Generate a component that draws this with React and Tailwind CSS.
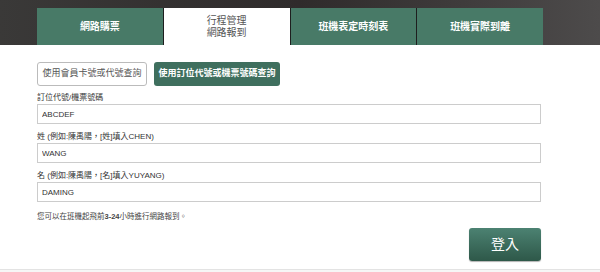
import React, { useState } from 'react';

const tabs = [
  { label: '網路購票' },
  { label: '行程管理', sub: '網路報到', active: true },
  { label: '班機表定時刻表' },
  { label: '班機實際到離' },
];

const fields = [
  { label: '訂位代號/機票號碼', value: 'ABCDEF' },
  { label: '姓 (例如:陳禹陽，[姓]填入CHEN)', value: 'WANG' },
  { label: '名 (例如:陳禹陽，[名]填入YUYANG)', value: 'DAMING' },
];

const App = () => {
  const [mode, setMode] = useState('booking');
  const [values, setValues] = useState(fields.map(f => f.value));

  return (
    <div className="w-[600px] h-[272px] bg-white flex flex-col overflow-hidden font-['Liberation_Sans','Noto_Sans_CJK_TC',sans-serif]">
      {/* Top band with tabs */}
      <div className="h-[45px] shrink-0 bg-gradient-to-r from-[#3a3938] via-[#2f2b2b] to-[#4d4b4b] flex items-end">
        <div className="ml-[37px] w-[506px] h-[37px] flex gap-px bg-[#1e1e1e]">
          {tabs.map((t, i) => (
            <div
              key={i}
              className={
                t.active
                  ? 'flex-1 bg-white flex flex-col items-center justify-center text-[10px] leading-[12px] text-[#555]'
                  : 'flex-1 bg-[#487a67] flex items-center justify-center text-[10px] font-bold text-white'
              }
            >
              <span>{t.label}</span>
              {t.sub && <span>{t.sub}</span>}
            </div>
          ))}
        </div>
      </div>

      {/* Form */}
      <div className="flex-1 ml-[37px] w-[504px] pt-[17px] flex flex-col">
        <div className="flex gap-[7px]">
          <button
            type="button"
            onClick={() => setMode('member')}
            className="h-[24px] w-[110px] rounded-[3px] border border-[#bbb] bg-white text-[9px] text-[#555]"
          >
            使用會員卡號或代號查詢
          </button>
          <button
            type="button"
            onClick={() => setMode('booking')}
            className="h-[24px] w-[126px] rounded-[3px] bg-[#3f6f5e] text-[9px] font-bold text-white"
          >
            使用訂位代號或機票號碼查詢
          </button>
        </div>

        <div className="mt-[7px] flex flex-col gap-[8px]">
          {fields.map((f, i) => (
            <div key={i} className="flex flex-col">
              <label className="text-[8px] leading-[10px] text-[#333]">{f.label}</label>
              <input
                value={values[i]}
                onChange={e => {
                  const next = [...values];
                  next[i] = e.target.value;
                  setValues(next);
                }}
                className="mt-[1px] h-[20px] w-full border border-[#ccc] px-[4px] text-[8px] text-[#333] outline-none"
              />
            </div>
          ))}
        </div>

        <p className="mt-[10px] text-[7.5px] leading-[10px] text-[#444]">
          您可以在班機起飛前<b>3-24</b>小時進行網路報到。
        </p>

        <div className="mt-[6px] flex justify-end">
          <button
            type="submit"
            className="h-[33px] w-[72px] rounded-[3px] bg-gradient-to-b from-[#4c8272] to-[#2e5849] text-[14px] text-white shadow-[0_1px_1px_rgba(0,0,0,0.3)]"
          >
            登入
          </button>
        </div>
      </div>

      <div className="h-[3px] shrink-0 border-t border-[#e3e3e3] bg-[#f6f6f6]" />
    </div>
  );
};

export default App;
